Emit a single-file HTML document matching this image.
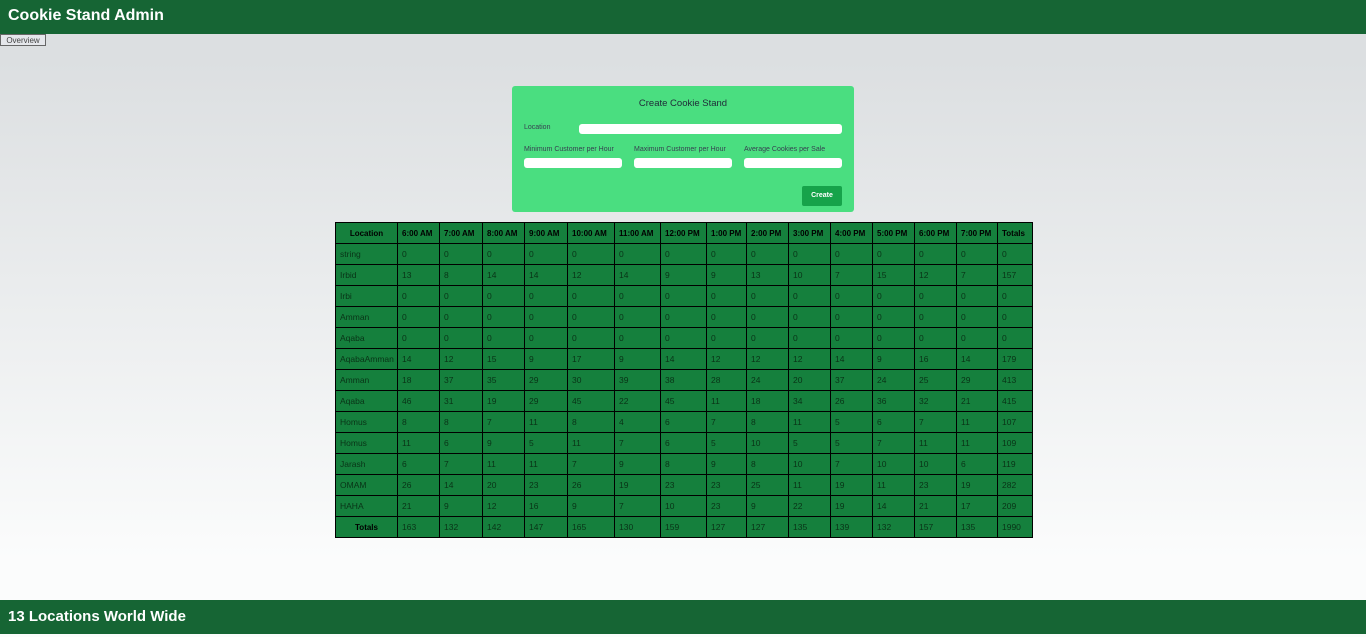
<!DOCTYPE html>
<html><head><style>
*{box-sizing:border-box;margin:0;padding:0}
body{width:1366px;height:637px;overflow:hidden;font-family:"Liberation Sans",sans-serif;background:linear-gradient(#dcdfe1 34px,#dcdfe1 60px,#fbfcfc 560px);position:relative}
header{position:absolute;left:0;top:0;width:1366px;height:34px;background:#166534;color:#fff;font-weight:bold;font-size:16px;padding:7px 8px}
.ov{position:absolute;left:0;top:34px;width:46px;height:12px;border:1px solid #666;background:#e5e7eb;font-size:8px;color:#444;text-align:center;line-height:11px}
.form{position:absolute;left:512px;top:86px;width:342px;height:126px;background:#4ade80;border-radius:3px;color:#1f2937}
.form .t{position:absolute;top:12px;width:100%;text-align:center;font-size:9.5px}
.lab{position:absolute;font-size:7px;color:#374151}
.inp{position:absolute;background:#fff;border-radius:3px;height:10px}
.btn{position:absolute;left:290px;top:100px;width:40px;height:20px;background:#16a34a;border-radius:2px;color:#fff;font-size:7px;font-weight:bold;text-align:center;line-height:20px}
table{position:absolute;left:335px;top:222px;width:697px;border-collapse:collapse;table-layout:fixed;background:#15803d;font-size:8.5px}
td,th{border:1px solid #000;height:21px;padding:0 4px;text-align:left;color:#093317;white-space:nowrap;overflow:hidden}
th{color:#000;font-weight:bold;font-size:8px}
th:first-child{text-align:center}
footer{position:absolute;left:0;top:600px;width:1366px;height:34px;background:#166534;color:#fff;font-weight:bold;font-size:15px;padding:8px}
</style></head><body>
<header>Cookie Stand Admin</header>
<div class="ov">Overview</div>
<div class="form">
<div class="t">Create Cookie Stand</div>
<div class="lab" style="left:12px;top:38px">Location</div>
<div class="inp" style="left:67px;top:38px;width:263px"></div>
<div class="lab" style="left:12px;top:60px">Minimum Customer per Hour</div>
<div class="lab" style="left:122px;top:60px">Maximum Customer per Hour</div>
<div class="lab" style="left:232px;top:60px">Average Cookies per Sale</div>
<div class="inp" style="left:12px;top:72px;width:98px"></div>
<div class="inp" style="left:122px;top:72px;width:98px"></div>
<div class="inp" style="left:232px;top:72px;width:98px"></div>
<div class="btn">Create</div>
</div>
<table>
<colgroup><col style="width:62px"><col style="width:42px"><col style="width:43px"><col style="width:42px"><col style="width:43px"><col style="width:47px"><col style="width:46px"><col style="width:46px"><col style="width:40px"><col style="width:42px"><col style="width:42px"><col style="width:42px"><col style="width:42px"><col style="width:42px"><col style="width:41px"><col style="width:35px"></colgroup>
<tr><th>Location</th><th>6:00 AM</th><th>7:00 AM</th><th>8:00 AM</th><th>9:00 AM</th><th>10:00 AM</th><th>11:00 AM</th><th>12:00 PM</th><th>1:00 PM</th><th>2:00 PM</th><th>3:00 PM</th><th>4:00 PM</th><th>5:00 PM</th><th>6:00 PM</th><th>7:00 PM</th><th>Totals</th></tr>
<tr><td>string</td><td>0</td><td>0</td><td>0</td><td>0</td><td>0</td><td>0</td><td>0</td><td>0</td><td>0</td><td>0</td><td>0</td><td>0</td><td>0</td><td>0</td><td>0</td></tr>
<tr><td>Irbid</td><td>13</td><td>8</td><td>14</td><td>14</td><td>12</td><td>14</td><td>9</td><td>9</td><td>13</td><td>10</td><td>7</td><td>15</td><td>12</td><td>7</td><td>157</td></tr>
<tr><td>Irbi</td><td>0</td><td>0</td><td>0</td><td>0</td><td>0</td><td>0</td><td>0</td><td>0</td><td>0</td><td>0</td><td>0</td><td>0</td><td>0</td><td>0</td><td>0</td></tr>
<tr><td>Amman</td><td>0</td><td>0</td><td>0</td><td>0</td><td>0</td><td>0</td><td>0</td><td>0</td><td>0</td><td>0</td><td>0</td><td>0</td><td>0</td><td>0</td><td>0</td></tr>
<tr><td>Aqaba</td><td>0</td><td>0</td><td>0</td><td>0</td><td>0</td><td>0</td><td>0</td><td>0</td><td>0</td><td>0</td><td>0</td><td>0</td><td>0</td><td>0</td><td>0</td></tr>
<tr><td>AqabaAmman</td><td>14</td><td>12</td><td>15</td><td>9</td><td>17</td><td>9</td><td>14</td><td>12</td><td>12</td><td>12</td><td>14</td><td>9</td><td>16</td><td>14</td><td>179</td></tr>
<tr><td>Amman</td><td>18</td><td>37</td><td>35</td><td>29</td><td>30</td><td>39</td><td>38</td><td>28</td><td>24</td><td>20</td><td>37</td><td>24</td><td>25</td><td>29</td><td>413</td></tr>
<tr><td>Aqaba</td><td>46</td><td>31</td><td>19</td><td>29</td><td>45</td><td>22</td><td>45</td><td>11</td><td>18</td><td>34</td><td>26</td><td>36</td><td>32</td><td>21</td><td>415</td></tr>
<tr><td>Homus</td><td>8</td><td>8</td><td>7</td><td>11</td><td>8</td><td>4</td><td>6</td><td>7</td><td>8</td><td>11</td><td>5</td><td>6</td><td>7</td><td>11</td><td>107</td></tr>
<tr><td>Homus</td><td>11</td><td>6</td><td>9</td><td>5</td><td>11</td><td>7</td><td>6</td><td>5</td><td>10</td><td>5</td><td>5</td><td>7</td><td>11</td><td>11</td><td>109</td></tr>
<tr><td>Jarash</td><td>6</td><td>7</td><td>11</td><td>11</td><td>7</td><td>9</td><td>8</td><td>9</td><td>8</td><td>10</td><td>7</td><td>10</td><td>10</td><td>6</td><td>119</td></tr>
<tr><td>OMAM</td><td>26</td><td>14</td><td>20</td><td>23</td><td>26</td><td>19</td><td>23</td><td>23</td><td>25</td><td>11</td><td>19</td><td>11</td><td>23</td><td>19</td><td>282</td></tr>
<tr><td>HAHA</td><td>21</td><td>9</td><td>12</td><td>16</td><td>9</td><td>7</td><td>10</td><td>23</td><td>9</td><td>22</td><td>19</td><td>14</td><td>21</td><td>17</td><td>209</td></tr>
<tr><th>Totals</th><td>163</td><td>132</td><td>142</td><td>147</td><td>165</td><td>130</td><td>159</td><td>127</td><td>127</td><td>135</td><td>139</td><td>132</td><td>157</td><td>135</td><td>1990</td></tr>
</table>
<footer>13 Locations World Wide</footer>
</body></html>
